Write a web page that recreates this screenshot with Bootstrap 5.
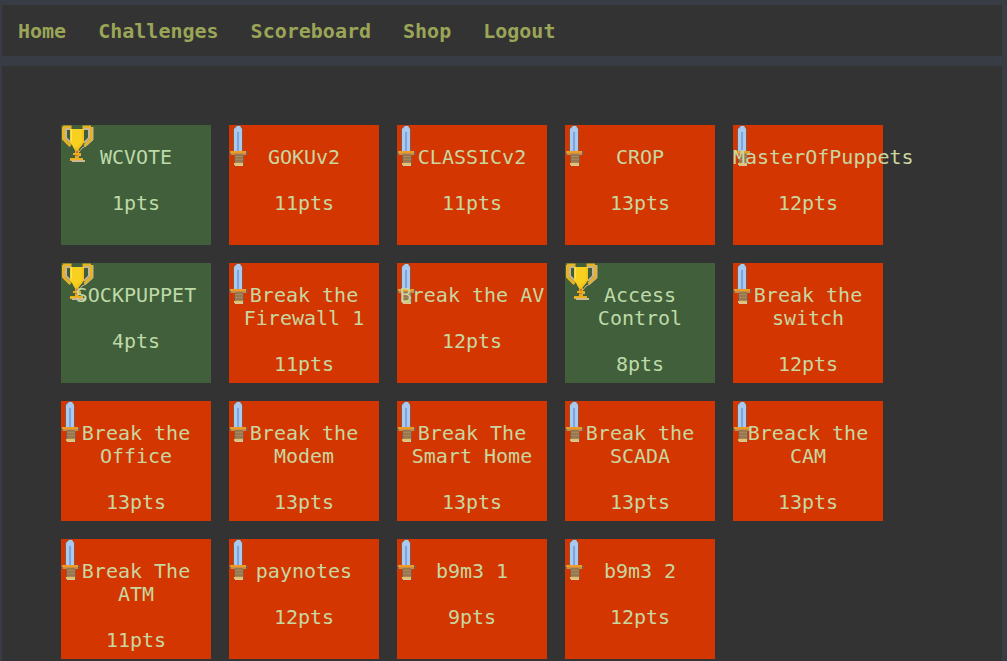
<!DOCTYPE html>
<html lang="en">
<head>
<meta charset="utf-8">
<meta name="viewport" content="width=device-width, initial-scale=1">
<title>Challenges</title>
<link href="https://cdn.jsdelivr.net/npm/bootstrap@5.3.0/dist/css/bootstrap.min.css" rel="stylesheet">
<style>
  body {
    background: #383c45;
    font-family: "DejaVu Sans Mono", monospace;
    font-size: 20px;
    line-height: 23px;
    padding: 5px 5px 0 2px;
  }
  .panel { background: #333; }
  .site-nav { padding: 15px 4px 13px; margin-bottom: 10px; }
  .site-nav .navbar-nav { gap: 32px; }
  .site-nav .nav-link { color: #9ba557; font-weight: 700; }
  .board { padding: 59px 59px 2px; }
  .tiles { grid-template-columns: repeat(auto-fill, 150px); gap: 18px; }
  .tile {
    background: #d33600;
    color: #c8d6a0;
    min-height: 120px;
    padding-top: 21px;
  }
  .tile:hover { color: #e6f0c8; }
  .tile.solved { background: #415f3a; color: #bddaa8; }
  .tile-name { margin-bottom: 23px; }
  .tile-icon { left: 0; top: 0; }
</style>
</head>
<body>
<svg width="0" height="0" class="position-absolute" aria-hidden="true">
  <symbol id="trophy" viewBox="0 0 33 38">
    <path d="M2 2h7v3M30 2h-7v3M2.500 2v12l7 7M30.500 2v12l-7 7" fill="none" stroke="#e6b422" stroke-width="3"/>
    <path d="M9 4H5v9l5 5M23 4h5v9l-5 5" fill="none" stroke="#c9b493" stroke-width="2"/>
    <path d="M32 2v13l-7 6-4 2-3 4" fill="none" stroke="#c9b493" stroke-width="1"/>
    <path d="M9 4h14v13l-2 3-4 5h-3l-3-5-2-2z" fill="#f8d020"/>
    <path d="M21 5h2v12l-2 3-4 5h-3l-2-3h4l5-5z" fill="#f2c41d"/>
    <path d="M10 4h1v12h-1z" fill="#fbe468"/>
    <path d="M14 25h4v3h2v2h-2v3h4v3H9v-3h5v-3h-2v-2h2z" fill="#e9ad1c"/>
    <path d="M15 26h2v2h-2zM14 30h3v1h-3z" fill="#d8761f"/>
    <path d="M11 35h13v2H11zM18 30h2v1h-2z" fill="#cdb894"/>
    <path d="M9 34h13v1H9z" fill="#f0b41c"/>
  </symbol>
  <symbol id="sword" viewBox="0 0 19 42">
    <path d="M8 0h3l3 4v22h5v4h-4v11H5V30H0v-4h4V4z" fill="#6c6865" opacity=".6"/>
    <path d="M8 1h3l2 3v22H5V4z" fill="#a9caee"/>
    <path d="M8 7h2v19H8z" fill="#7da3dc"/>
    <path d="M1 26h16v2H1z" fill="#ee9b27"/>
    <path d="M2 28h15v2H2z" fill="#cb8c44"/>
    <path d="M6 29h8v10H6z" fill="#987850"/>
    <path d="M6 31h8v1H6zM6 34h8v1H6zM6 37h8v1H6z" fill="#a68759"/>
    <path d="M5 38h9v2H5z" fill="#e3c16c"/>
    <path d="M6 40h8v1H6z" fill="#d9c6a4"/>
  </symbol>
</svg>

<nav class="navbar navbar-expand panel site-nav">
  <ul class="navbar-nav px-2 mx-1">
    <li class="nav-item"><a class="nav-link p-0" href="#">Home</a></li>
    <li class="nav-item"><a class="nav-link p-0" href="#">Challenges</a></li>
    <li class="nav-item"><a class="nav-link p-0" href="#">Scoreboard</a></li>
    <li class="nav-item"><a class="nav-link p-0" href="#">Shop</a></li>
    <li class="nav-item"><a class="nav-link p-0" href="#">Logout</a></li>
  </ul>
</nav>

<main class="panel board">
  <div class="d-grid tiles" id="tiles"></div>
</main>

<script src="https://cdn.jsdelivr.net/npm/bootstrap@5.3.0/dist/js/bootstrap.bundle.min.js"></script>
<script>
  const challenges = [
    ["WCVOTE", 1, true], ["GOKUv2", 11], ["CLASSICv2", 11], ["CROP", 13], ["MasterOfPuppets", 12],
    ["SOCKPUPPET", 4, true], ["Break the Firewall 1", 11], ["Break the AV", 12], ["Access Control", 8, true], ["Break the switch", 12],
    ["Break the Office", 13], ["Break the Modem", 13], ["Break The Smart Home", 13], ["Break the SCADA", 13], ["Breack the CAM", 13],
    ["Break The ATM", 11], ["paynotes", 12], ["b9m3 1", 9], ["b9m3 2", 12]
  ];
  document.getElementById("tiles").innerHTML = challenges.map(([name, points, solved]) => `
    <a href="#" class="tile ${solved ? "solved" : ""} d-block position-relative text-center text-decoration-none">
      <svg class="tile-icon position-absolute" width="${solved ? 33 : 19}" height="${solved ? 38 : 42}" aria-hidden="true"><use href="#${solved ? "trophy" : "sword"}"/></svg>
      <div class="tile-name position-relative">${name}</div>
      <div>${points}pts</div>
    </a>`).join("");
</script>
</body>
</html>
